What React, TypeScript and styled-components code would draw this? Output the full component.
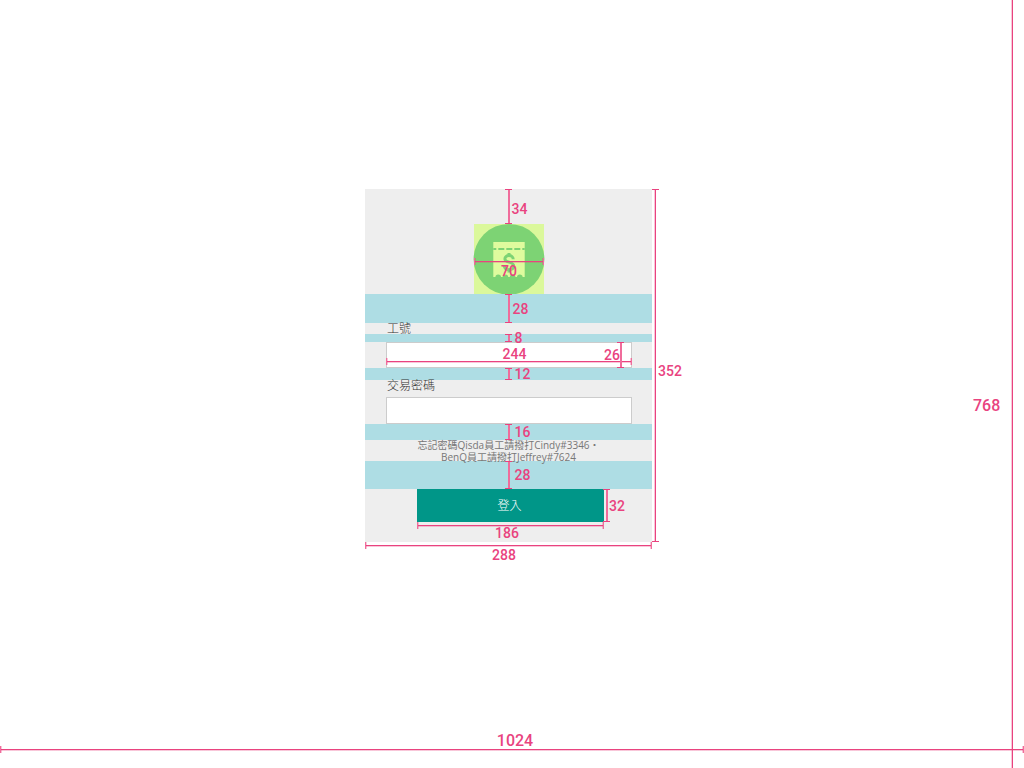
import React from 'react';
import styled, { createGlobalStyle, css } from 'styled-components';

const PINK = '#e9437f';
const MID_PINK = '#f06c9b';
const PALE_PINK = 'rgba(233, 67, 127, 0.3)';

const GlobalStyle = createGlobalStyle`
  *, *::before, *::after { box-sizing: border-box; }
  body {
    margin: 0;
    background: #fff;
    font-family: "Open Sans", "Noto Sans CJK TC", sans-serif;
  }
`;

const Stage = styled.main`
  display: grid;
  grid-template-columns: 45px 1fr minmax(0, 287px) 1fr 52px;
  grid-template-rows: 1fr auto 1fr 37px;
  min-height: 100vh;
  overflow: hidden;
`;

const Card = styled.form`
  grid-area: 2 / 3;
  display: flex;
  flex-direction: column;
  padding-bottom: 3px;
  background: #eee;
`;

const LogoBox = styled.div`
  display: grid;
  align-self: center;
  width: 70px;
  height: 70px;
  margin-left: 1px;
  background: #dbf89b;

  > * {
    grid-area: 1 / 1;
  }
`;

const LogoArt = styled.svg`
  display: block;
  width: 70px;
  height: 70px;
  overflow: visible;
`;

const Spacer = styled.div<{ $size: number; $plain?: boolean; $gap?: number }>`
  display: flex;
  align-items: center;
  gap: ${(p) => p.$gap ?? 3}px;
  height: ${(p) => p.$size}px;
  padding-left: calc(50% - 4px);
  background: ${(p) => (p.$plain ? 'transparent' : '#aedde4')};
`;

const Label = styled.label<{ $gap?: number }>`
  position: relative;
  z-index: 1;
  padding: 0 20px ${(p) => p.$gap ?? 0}px 22px;
  color: #333;
  font-size: 12px;
  font-weight: 300;
  line-height: 11px;
`;

const Field = styled.div`
  display: grid;
  margin: 0 20px 0 21px;

  > * {
    grid-area: 1 / 1;
  }
`;

const TextInput = styled.input<{ $height: number }>`
  width: 100%;
  height: ${(p) => p.$height}px;
  padding: 0 6px;
  border: 1px solid #ccc;
  border-radius: 0;
  background: #fff;
  font: inherit;
  font-size: 12px;
  outline: none;
`;

const Help = styled.p`
  position: relative;
  z-index: 1;
  height: 22px;
  margin: -1px 0 0;
  color: #777;
  font-size: 10px;
  line-height: 12px;
  text-align: center;
  white-space: nowrap;
`;

const Actions = styled.div`
  display: grid;
  grid-template-columns: 1fr 48px;
  padding-left: 52px;
`;

const Submit = styled.button`
  height: 33px;
  padding: 0 2px 0 0;
  border: 0;
  background: #009688;
  color: #fff;
  font: inherit;
  font-size: 12px;
  font-weight: 300;
  line-height: 31px;
`;

const overlay = css`
  position: relative;
  z-index: 2;
  flex: none;
  pointer-events: none;
`;

const VerticalRule = styled.div<{ $thin?: boolean; $open?: boolean }>`
  ${overlay}
  align-self: stretch;
  width: 7px;
  border: solid ${PINK};
  border-width: ${(p) => (p.$open ? 0 : '1px 0')};
  background: ${(p) =>
    p.$thin
      ? `linear-gradient(90deg, transparent 2px, ${PALE_PINK} 2px 3px, ${PINK} 3px 4px, transparent 4px)`
      : `linear-gradient(90deg, transparent 3px, ${MID_PINK} 3px 5px, transparent 5px)`};
`;

const HorizontalRule = styled.div`
  ${overlay}
  height: 7px;
  border: solid ${MID_PINK};
  border-width: 0 1px;
  background: linear-gradient(transparent 3px, ${PINK} 3px 4px, ${PALE_PINK} 4px 5px, transparent 5px);
  box-shadow: inset 1px 0 0 ${PALE_PINK}, inset -1px 0 0 ${PALE_PINK};
`;

const Figure = styled.span<{ $large?: boolean; $drop?: number }>`
  ${overlay}
  padding-top: ${(p) => p.$drop ?? 0}px;
  color: ${PINK};
  font-family: Roboto, "Liberation Sans", sans-serif;
  font-size: ${(p) => (p.$large ? 16 : 14)}px;
  font-weight: 500;
  line-height: 11px;
  text-align: center;
  white-space: nowrap;
`;

const Across = styled.div`
  display: flex;
  flex-direction: column;
  pointer-events: none;
`;

const Down = styled.div`
  display: flex;
  align-items: center;
  pointer-events: none;
`;

const LogoWidth = styled(Across)`
  gap: 1px;
  padding-top: 34px;
`;

const FieldWidth = styled(Across)`
  justify-content: flex-end;
  padding: 0 0 3px;

  ${Figure} {
    margin: 0 -11px -2px 0;
  }
`;

const FieldHeight = styled(Down)`
  justify-content: flex-end;
  padding-right: 8px;

  ${Figure} {
    margin-right: -3px;
  }
`;

const ButtonWidth = styled(Across)`
  ${Figure} {
    margin-top: -1px;
    padding-right: 7px;
  }
`;

const ButtonHeight = styled(Down)`
  margin-left: -1px;

  ${Figure} {
    margin-left: -1px;
  }
`;

const CardHeight = styled(Down)`
  grid-area: 2 / 4;

  ${Figure} {
    margin-left: -1px;
  }
`;

const CardWidth = styled(Across)`
  grid-area: 3 / 3;

  ${Figure} {
    padding-right: 9px;
  }
`;

const ScreenHeight = styled(Down)`
  grid-area: 1 / 5 / 5 / 6;
  gap: 9px;
  padding-left: 1px;
`;

const ScreenWidth = styled(Across)`
  grid-area: 4 / 1 / 5 / 6;
  padding-top: 4px;

  ${Figure} {
    margin-left: 6px;
  }
`;

type GapProps = { size: number; value: string; plain?: boolean; gap?: number; drop?: number };

const MeasuredGap = ({ size, value, plain, gap, drop }: GapProps) => (
  <Spacer $size={size} $plain={plain} $gap={gap}>
    <VerticalRule />
    <Figure $drop={drop}>{value}</Figure>
  </Spacer>
);

const ReceiptLogo = () => (
  <LogoArt viewBox="0 0 70 70" aria-hidden="true">
    <circle cx="35" cy="35.3" r="35.4" fill="#7dd374" />
    <path fill="#dffb9e" d="M19.3 18H50.7V53H19.3Z" />
    <g fill="#7dd374">
      <circle cx="24.2" cy="53.2" r="2.8" />
      <circle cx="31.4" cy="53.2" r="2.8" />
      <circle cx="38.6" cy="53.2" r="2.8" />
      <circle cx="45.8" cy="53.2" r="2.8" />
    </g>
    <path d="M19.3 25H50.7" stroke="#7dd374" strokeWidth="2" strokeDasharray="6 2" strokeDashoffset="3" />
    <path
      d="M39.2 35.2C39.2 33 37.3 31.6 35 31.6C32.4 31.6 30.9 33 30.9 34.9C30.9 39.3 39.7 37 39.7 42.1C39.7 44.4 37.6 45.7 35 45.7C32.4 45.7 30.4 44.3 30.4 41.9M35 29V31.8M35 45.5V48.5"
      fill="none"
      stroke="#7dd374"
      strokeWidth="3"
    />
  </LogoArt>
);

export default function App() {
  return (
    <>
      <GlobalStyle />
      <Stage lang="zh-Hant">
        <Card onSubmit={(event) => event.preventDefault()}>
          <MeasuredGap size={35} value="34" plain gap={0} drop={6} />
          <LogoBox>
            <ReceiptLogo />
            <LogoWidth>
              <HorizontalRule />
              <Figure>70</Figure>
            </LogoWidth>
          </LogoBox>
          <MeasuredGap size={29} value="28" gap={1} drop={1} />
          <Label htmlFor="employee">工號</Label>
          <MeasuredGap size={8} value="8" drop={1} />
          <Field>
            <TextInput id="employee" type="text" $height={26} />
            <FieldWidth>
              <Figure>244</Figure>
              <HorizontalRule />
            </FieldWidth>
            <FieldHeight>
              <Figure>26</Figure>
              <VerticalRule />
            </FieldHeight>
          </Field>
          <MeasuredGap size={12} value="12" drop={1} />
          <Label htmlFor="password" $gap={6}>交易密碼</Label>
          <Field>
            <TextInput id="password" type="password" $height={27} />
          </Field>
          <MeasuredGap size={16} value="16" drop={1} />
          <Help>
            忘記密碼Qisda員工請撥打Cindy#3346・<br />
            BenQ員工請撥打Jeffrey#7624
          </Help>
          <MeasuredGap size={28} value="28" drop={1} />
          <Actions>
            <Submit type="submit">登入</Submit>
            <ButtonHeight>
              <VerticalRule />
              <Figure $drop={2}>32</Figure>
            </ButtonHeight>
            <ButtonWidth>
              <HorizontalRule />
              <Figure>186</Figure>
            </ButtonWidth>
          </Actions>
        </Card>
        <CardHeight>
          <VerticalRule $thin />
          <Figure $drop={11}>352</Figure>
        </CardHeight>
        <CardWidth>
          <HorizontalRule />
          <Figure $drop={1}>288</Figure>
        </CardWidth>
        <ScreenHeight>
          <Figure $large $drop={42}>768</Figure>
          <VerticalRule $thin $open />
        </ScreenHeight>
        <ScreenWidth>
          <Figure $large>1024</Figure>
          <HorizontalRule />
        </ScreenWidth>
      </Stage>
    </>
  );
}
